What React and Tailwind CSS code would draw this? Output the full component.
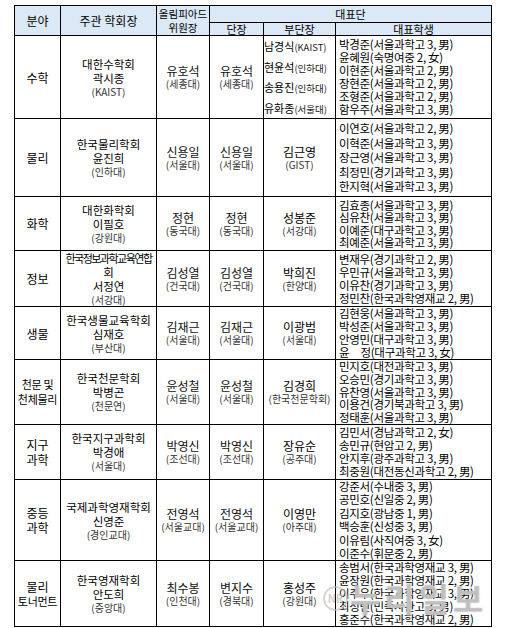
import React from 'react'

const rows = [
  {
    field: ['수학'], h: 'h-[80px]', lh: 'leading-[13px]',
    org: ['대한수학회', '곽시종'], orgAff: '(KAIST)',
    chair: ['유호석', '(세종대)'], leader: ['유호석', '(세종대)'],
    deputies: [['남경식', '(KAIST)'], ['현윤석', '(인하대)'], ['송용진', '(인하대)'], ['유화종', '(서울대)']],
    students: ['박경준(서울과학고 3, 男)', '윤혜원(숙명여중 2, 女)', '이현준(서울과학고 2, 男)', '장현준(서울과학고 2, 男)', '조형준(서울과학고 2, 男)', '함우주(서울과학고 3, 男)'],
  },
  {
    field: ['물리'], h: 'h-[78px]', lh: 'leading-[14.5px]',
    org: ['한국물리학회', '윤진희'], orgAff: '(인하대)',
    chair: ['신용일', '(서울대)'], leader: ['신용일', '(서울대)'],
    deputy: ['김근영', '(GIST)'],
    students: ['이연호(서울과학고 2, 男)', '이혁준(서울과학고 3, 男)', '장근영(서울과학고 3, 男)', '최정민(경기과학고 3, 男)', '한지혁(서울과학고 3, 男)'],
  },
  {
    field: ['화학'], h: 'h-[54px]', lh: 'leading-[12.5px]',
    org: ['대한화학회', '이필호'], orgAff: '(강원대)',
    chair: ['정현', '(동국대)'], leader: ['정현', '(동국대)'],
    deputy: ['성봉준', '(서강대)'],
    students: ['김효종(서울과학고 3, 男)', '심유찬(서울과학고 3, 男)', '이예준(대구과학고 3, 男)', '최예준(서울과학고 3, 男)'],
  },
  {
    field: ['정보'], h: 'h-[55px]', lh: 'leading-[13px]',
    org: ['한국정보과학교육연합', '회', '서정연'], orgAff: '(서강대)', squeeze: true,
    chair: ['김성열', '(건국대)'], leader: ['김성열', '(건국대)'],
    deputy: ['박희진', '(한양대)'],
    students: ['변재우(경기과학고 2, 男)', '우민규(서울과학고 3, 男)', '이유찬(경기과학고 3, 男)', '정민찬(한국과학영재교 2, 男)'],
  },
  {
    field: ['생물'], h: 'h-[53px]', lh: 'leading-[13px]',
    org: ['한국생물교육학회', '심재호'], orgAff: '(부산대)',
    chair: ['김재근', '(서울대)'], leader: ['김재근', '(서울대)'],
    deputy: ['이광범', '(서울대)'],
    students: ['김현웅(서울과학고 3, 男)', '박성준(서울과학고 3, 男)', '안영민(대구과학고 3, 男)', '윤　정(대구과학고 3, 女)'],
  },
  {
    field: ['천문 및', '천체물리'], h: 'h-[64px]', lh: 'leading-[12.8px]',
    org: ['한국천문학회', '박병곤'], orgAff: '(천문연)',
    chair: ['윤성철', '(서울대)'], leader: ['윤성철', '(서울대)'],
    deputy: ['김경희', '(한국천문학회)'],
    students: ['민지호(대전과학고 3, 男)', '오승민(경기과학고 3, 男)', '유찬영(서울과학고 3, 男)', '이용건(경기북과학고 3, 男)', '정태훈(서울과학고 3, 男)'],
  },
  {
    field: ['지구', '과학'], h: 'h-[55px]', lh: 'leading-[13px]',
    org: ['한국지구과학회', '박경애'], orgAff: '(서울대)',
    chair: ['박영신', '(조선대)'], leader: ['박영신', '(조선대)'],
    deputy: ['장유순', '(공주대)'],
    students: ['김민서(경남과학고 2, 女)', '송민규(현암고 2, 男)', '안지후(광주과학고 3, 男)', '최중원(대전동신과학고 2, 男)'],
  },
  {
    field: ['중등', '과학'], h: 'h-[80px]', lh: 'leading-[13.4px]',
    org: ['국제과학영재학회', '신영준'], orgAff: '(경인교대)',
    chair: ['전영석', '(서울교대)'], leader: ['전영석', '(서울교대)'],
    deputy: ['이영만', '(아주대)'],
    students: ['강준서(수내중 3, 男)', '공민호(신일중 2, 男)', '김지호(광남중 1, 男)', '백승훈(신성중 3, 男)', '이유림(사직여중 3, 女)', '이준수(휘문중 2, 男)'],
  },
  {
    field: ['물리', '토너먼트'], h: 'h-[66px]', lh: 'leading-[13px]',
    org: ['한국영재학회', '안도희'], orgAff: '(중앙대)',
    chair: ['최수봉', '(인천대)'], leader: ['변지수', '(경북대)'],
    deputy: ['홍성주', '(강원대)'],
    students: ['송범서(한국과학영재교 3, 男)', '윤장원(한국과학영재교 2, 男)', '이주우(한국과학영재교 3, 男)', '최성빈(민족사관고 3, 男)', '홍준수(한국과학영재교 2, 男)'],
  },
]

const td = 'border border-black p-0 align-middle text-center'

function NameCell({ name, aff }) {
  return (
    <td className={td}>
      <div className="text-[12px] leading-[14px] text-[#111]">{name}</div>
      <div className="text-[10px] leading-[12px] text-[#333]">{aff}</div>
    </td>
  )
}

export default function App() {
  return (
    <div className="relative w-[506px] h-[628px] bg-white pt-[5px] pl-[14px] font-['Noto_Sans_CJK_KR','Noto_Sans',sans-serif] text-black">
      <table className="table-fixed border-collapse w-[477px] border-[1.5px] border-black">
        <colgroup>
          <col className="w-[46px]" />
          <col className="w-[96px]" />
          <col className="w-[53px]" />
          <col className="w-[54px]" />
          <col className="w-[72px]" />
          <col className="w-[156px]" />
        </colgroup>
        <thead>
          <tr className="h-[17px] bg-[#dbe9f6]">
            <th rowSpan={2} className={`${td} font-normal text-[12px]`}>분야</th>
            <th rowSpan={2} className={`${td} font-normal text-[12px]`}>주관 학회장</th>
            <th rowSpan={2} className={`${td} font-normal text-[10.5px] leading-[14px]`}>
              <div className="whitespace-nowrap">올림피아드</div>
              <div>위원장</div>
            </th>
            <th colSpan={3} className={`${td} font-normal text-[11px] leading-[15px]`}>대표단</th>
          </tr>
          <tr className="h-[13px] bg-[#dbe9f6]">
            <th className={`${td} font-normal text-[11px] leading-[12px]`}>단장</th>
            <th className={`${td} font-normal text-[11px] leading-[12px]`}>부단장</th>
            <th className={`${td} font-normal text-[11px] leading-[12px]`}>대표학생</th>
          </tr>
        </thead>
        <tbody>
          {rows.map(r => (
            <tr key={r.field.join('')} className={r.h}>
              <td className={`${td} text-[12px] leading-[15px]`}>
                {r.field.map(f => (
                  <div key={f} className={`whitespace-nowrap ${f.length > 3 ? 'text-[11px] tracking-[-0.3px]' : ''}`}>{f}</div>
                ))}
              </td>
              <td className={td}>
                {r.org.map((o, i) => (
                  <div
                    key={o}
                    className={`leading-[14px] whitespace-nowrap ${r.squeeze && i === 0 ? 'text-[11px] tracking-[-1.5px]' : 'text-[11.5px]'}`}
                  >
                    {o}
                  </div>
                ))}
                <div className="text-[10px] leading-[13px] text-[#333]">{r.orgAff}</div>
              </td>
              <NameCell name={r.chair[0]} aff={r.chair[1]} />
              <NameCell name={r.leader[0]} aff={r.leader[1]} />
              {r.deputies ? (
                <td className={`${td} text-left`}>
                  {r.deputies.map(d => (
                    <div key={d[0]} className="whitespace-nowrap leading-[17.5px]">
                      <span className="text-[11px]">{d[0]}</span>
                      <span className="text-[9.5px] text-[#222]">{d[1]}</span>
                    </div>
                  ))}
                </td>
              ) : (
                <td className={td}>
                  <div className="text-[12px] leading-[14px]">{r.deputy[0]}</div>
                  <div className="text-[10px] leading-[12px] whitespace-nowrap text-[#333]">{r.deputy[1]}</div>
                </td>
              )}
              <td className={`${td} text-left pl-[3px] text-[11.5px] tracking-[-0.3px] ${r.lh}`}>
                {r.students.map(s => <div key={s} className="whitespace-nowrap">{s}</div>)}
              </td>
            </tr>
          ))}
        </tbody>
      </table>

      {/* watermark */}
      <div className="absolute left-[323px] top-[581px] flex items-center gap-[2px] pointer-events-none">
        <div className="w-[25px] h-[25px] rounded-full border-[2px] border-[#bbbbbb]/60 flex items-center justify-center text-[11px] font-bold text-[#bbbbbb]/70">NR</div>
        <div className="text-[33px] font-bold leading-[34px] tracking-[4px] text-white/40 [text-shadow:0_0_1px_#999]">누리일보</div>
      </div>
    </div>
  )
}
